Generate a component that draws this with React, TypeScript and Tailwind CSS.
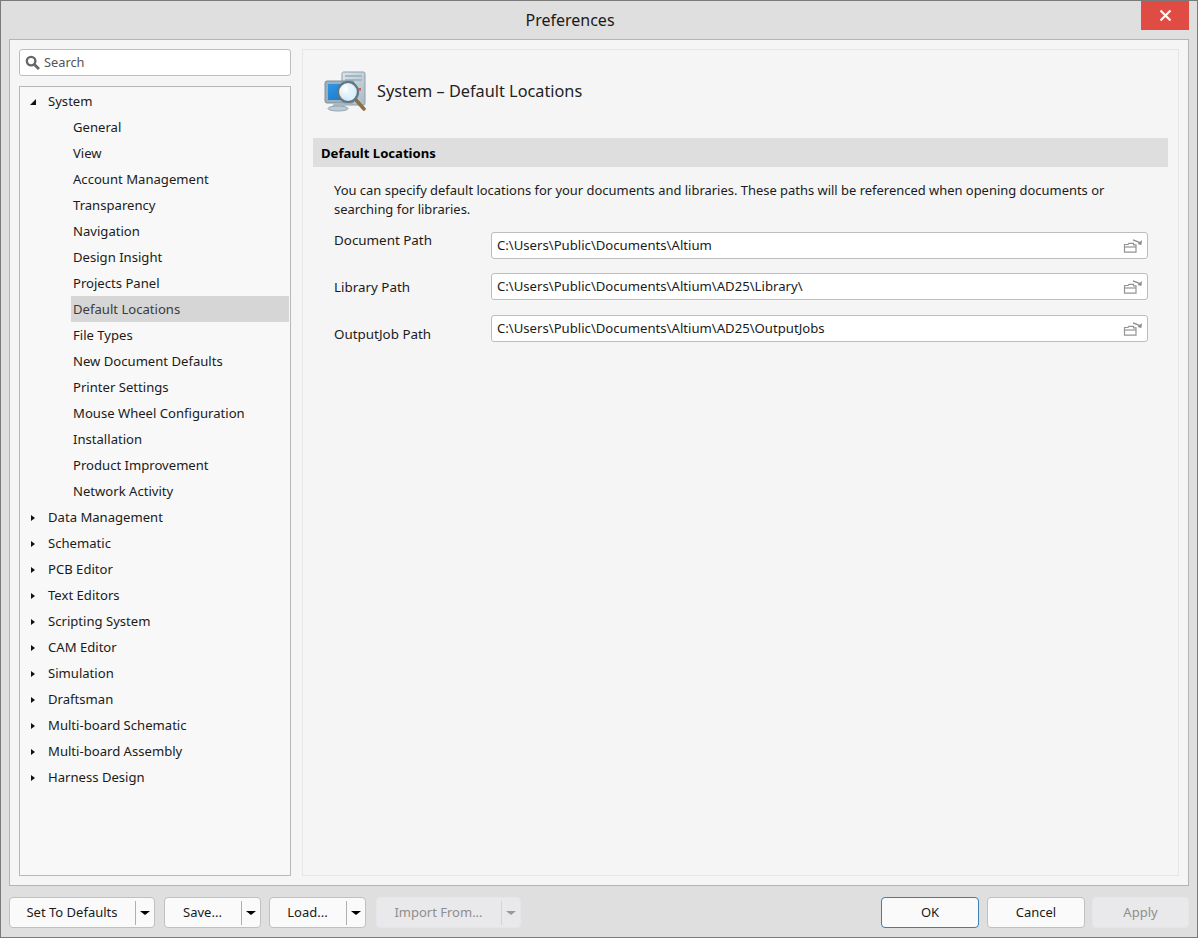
import React from 'react';

const systemItems = [
  'General',
  'View',
  'Account Management',
  'Transparency',
  'Navigation',
  'Design Insight',
  'Projects Panel',
  'Default Locations',
  'File Types',
  'New Document Defaults',
  'Printer Settings',
  'Mouse Wheel Configuration',
  'Installation',
  'Product Improvement',
  'Network Activity',
];

const otherItems = [
  'Data Management',
  'Schematic',
  'PCB Editor',
  'Text Editors',
  'Scripting System',
  'CAM Editor',
  'Simulation',
  'Draftsman',
  'Multi-board Schematic',
  'Multi-board Assembly',
  'Harness Design',
];

const paths = [
  { label: 'Document Path', value: 'C:\\Users\\Public\\Documents\\Altium', cls: 'mb-[14px]', labelCls: '-mt-[1px]' },
  { label: 'Library Path', value: 'C:\\Users\\Public\\Documents\\Altium\\AD25\\Library\\', cls: 'mb-[15px]', labelCls: 'pt-[5px]' },
  { label: 'OutputJob Path', value: 'C:\\Users\\Public\\Documents\\Altium\\AD25\\OutputJobs', cls: '', labelCls: 'pt-[10px]' },
];

function FolderIcon() {
  return (
    <svg width="20" height="14" viewBox="0 0 20 14" fill="none" stroke="#949494" strokeWidth="1.2">
      <path d="M1.5 13.2V5.5h3.5l1-1.2h4.5v1.6h2.5v7.3z" />
      <path d="M1.5 8h11.5" />
      <path d="M10 .8l7 2.8" stroke="#8a8a8a" strokeWidth="1.3" />
      <path d="M19 1l-.6 5-3.8-1z" fill="#8a8a8a" stroke="none" />
    </svg>
  );
}

function SystemIcon() {
  return (
    <svg width="44" height="44" viewBox="0 0 44 44" className="blur-[0.4px]">
      <defs>
        <linearGradient id="tower" x1="0" y1="0" x2="1" y2="1">
          <stop offset="0" stopColor="#dbe5eb" />
          <stop offset="1" stopColor="#a9bac6" />
        </linearGradient>
        <linearGradient id="screen" x1="0" y1="0" x2="1" y2="1">
          <stop offset="0" stopColor="#2f97e6" />
          <stop offset="1" stopColor="#1a74c4" />
        </linearGradient>
        <radialGradient id="lens" cx="0.4" cy="0.35" r="0.8">
          <stop offset="0" stopColor="#ffffff" />
          <stop offset="1" stopColor="#b9dcf2" />
        </radialGradient>
      </defs>
      <rect x="19" y="3" width="23" height="33" rx="1.5" fill="url(#tower)" stroke="#8b9fad" />
      <rect x="22" y="6" width="17" height="2" fill="#a3b6c2" />
      <rect x="22" y="10" width="17" height="2" fill="#a3b6c2" />
      <rect x="35.5" y="19" width="2.5" height="2.5" fill="#e2504c" />
      <rect x="2" y="12" width="29" height="22" rx="2" fill="#9db0bc" stroke="#7c909f" />
      <rect x="5" y="15" width="23" height="16" fill="url(#screen)" />
      <path d="M11 34h9l2 4H9z" fill="#a9bac5" />
      <ellipse cx="15" cy="39.5" rx="10" ry="2.5" fill="#bccad3" stroke="#93a6b3" />
      <path d="M33 31l8 9" stroke="#8f6d4b" strokeWidth="3.5" strokeLinecap="round" />
      <circle cx="25" cy="23" r="10" fill="url(#lens)" stroke="#62767f" strokeWidth="2.2" />
      <path d="M25 15v16h4a9 9 0 0 0 0-14z" fill="#e3f1fa" opacity="0.75" />
    </svg>
  );
}

function CaretDown({ disabled }: { disabled?: boolean }) {
  return (
    <span
      className={`w-0 h-0 border-x-[5px] border-x-transparent border-t-[4px] ${
        disabled ? 'border-t-[#9a9a9a]' : 'border-t-black'
      }`}
    />
  );
}

function SplitButton({ label, cls, disabled }: { label: string; cls: string; disabled?: boolean }) {
  return (
    <div
      className={`flex items-center h-[31px] rounded-[4px] border ${cls} ${
        disabled ? 'bg-[#e9e9eb] border-[#e6e6e8] text-[#8e8e8e]' : 'bg-[#fafafa] border-[#c0c0c0] text-[#1b1b1b]'
      }`}
    >
      <span className="flex-1 pr-[1px] text-center">{label}</span>
      <span className={`flex justify-center items-center w-[19px] h-[24px] border-l ${disabled ? 'border-[#d4d4d4]' : 'border-[#b0b0b0]'}`}>
        <CaretDown disabled={disabled} />
      </span>
    </div>
  );
}

export default function App() {
  return (
    <div
      className="flex flex-col w-[1198px] h-[938px] bg-[#dfdfdf] border border-[#7a7a7a] text-[13.1px] text-[#1b1b1b] overflow-hidden"
      style={{ fontFamily: '"Noto Sans", "Open Sans", sans-serif' }}
    >
      {/* Title bar */}
      <div className="flex h-[38px] shrink-0 px-[8px]">
        <div className="flex flex-1 justify-center pt-[7px] pr-[10px] text-[16px] text-[#1a1a1a]">Preferences</div>
        <div className="flex justify-center items-center w-[48px] h-[29px] bg-[#e04b44]">
          <svg width="13" height="13" viewBox="0 0 13 13" stroke="#fff" strokeWidth="2.2">
            <path d="M1.5 1.5l10 10M11.5 1.5l-10 10" />
          </svg>
        </div>
      </div>

      {/* Main panel */}
      <div className="flex flex-1 gap-[11px] mx-[8px] p-[9px] bg-[#f5f5f5] border border-[#b4b4b4] min-h-0">
        <div className="flex flex-col gap-[10px] w-[272px] shrink-0">
          <div className="flex items-center gap-[4px] h-[27px] px-[5px] bg-white rounded-[3px] border border-[#bdbdbd] text-[#555555] text-[12.8px]">
            <svg width="15" height="15" viewBox="0 0 14 14" fill="none" stroke="#666666">
              <circle cx="5.7" cy="5.7" r="4" strokeWidth="2.2" />
              <path d="M9 9l4 4" strokeWidth="2.6" />
            </svg>
            Search
          </div>
          <div className="flex-1 py-[1px] pr-[1px] bg-[#f8f8f8] border border-[#b8b8b8]">
            <div className="h-[26px] pl-[28px] leading-[27px] relative">
              <span className="absolute left-[10px] top-[11px] w-0 h-0 border-l-[6px] border-l-transparent border-b-[6px] border-b-[#111111]" />
              System
            </div>
            {systemItems.map((item) => (
              <div
                key={item}
                className={`h-[26px] ml-[51px] pl-[2px] leading-[27px] ${
                  item === 'Default Locations' ? 'bg-[#d6d6d6] text-[#3c3c3c]' : ''
                }`}
              >
                {item}
              </div>
            ))}
            {otherItems.map((item) => (
              <div key={item} className="h-[26px] pl-[28px] leading-[27px] relative">
                <span className="absolute left-[11px] top-[11px] w-0 h-0 border-y-[3.5px] border-y-transparent border-l-[4px] border-l-[#111111]" />
                {item}
              </div>
            ))}
          </div>
        </div>

        <div className="flex-1 px-[10px] bg-[#f5f5f5] border border-[#e6e6e6]">
          <div className="flex items-center gap-[10px] h-[88px] pl-[10px] pb-[6px] text-[16.3px] text-[#222222]">
            <SystemIcon />
            System – Default Locations
          </div>
          <div className="h-[29px] pl-[8px] leading-[31px] bg-[#dedede] font-bold text-black">Default Locations</div>
          <div className="pl-[21px] pr-[20px] pt-[14px] leading-[19px]">
            <p className="mb-[13px] text-[12.95px]">
              You can specify default locations for your documents and libraries. These paths will be referenced when opening documents or searching for libraries.
            </p>
            {paths.map((p) => (
              <div key={p.label} className={`flex ${p.cls}`}>
                <div className={`w-[157px] shrink-0 text-[13.4px] ${p.labelCls}`}>{p.label}</div>
                <div className="flex flex-1 justify-between items-center h-[27px] pl-[5px] pr-[4px] bg-white rounded-[3px] border border-[#bdbdbd] text-[13.15px]">
                  {p.value}
                  <FolderIcon />
                </div>
              </div>
            ))}
          </div>
        </div>
      </div>

      {/* Footer */}
      <div className="flex justify-between items-start h-[51px] shrink-0 px-[8px] pt-[11px] text-[13px]">
        <div className="flex">
          <SplitButton label="Set To Defaults" cls="w-[146px] mr-[9px]" />
          <SplitButton label="Save..." cls="w-[97px] mr-[8px]" />
          <SplitButton label="Load..." cls="w-[97px] mr-[10px]" />
          <SplitButton label="Import From..." cls="w-[145px]" disabled />
        </div>
        <div className="flex">
          <button className="w-[98px] h-[31px] mr-[8px] bg-[#fafafa] rounded-[4px] border border-[#3a7fb5]">OK</button>
          <button className="w-[98px] h-[31px] mr-[7px] bg-[#fafafa] rounded-[4px] border border-[#c0c0c0]">Cancel</button>
          <button className="w-[97px] h-[31px] bg-[#e9e9eb] rounded-[4px] border border-[#e6e6e8] text-[#8e8e8e]">Apply</button>
        </div>
      </div>
    </div>
  );
}
